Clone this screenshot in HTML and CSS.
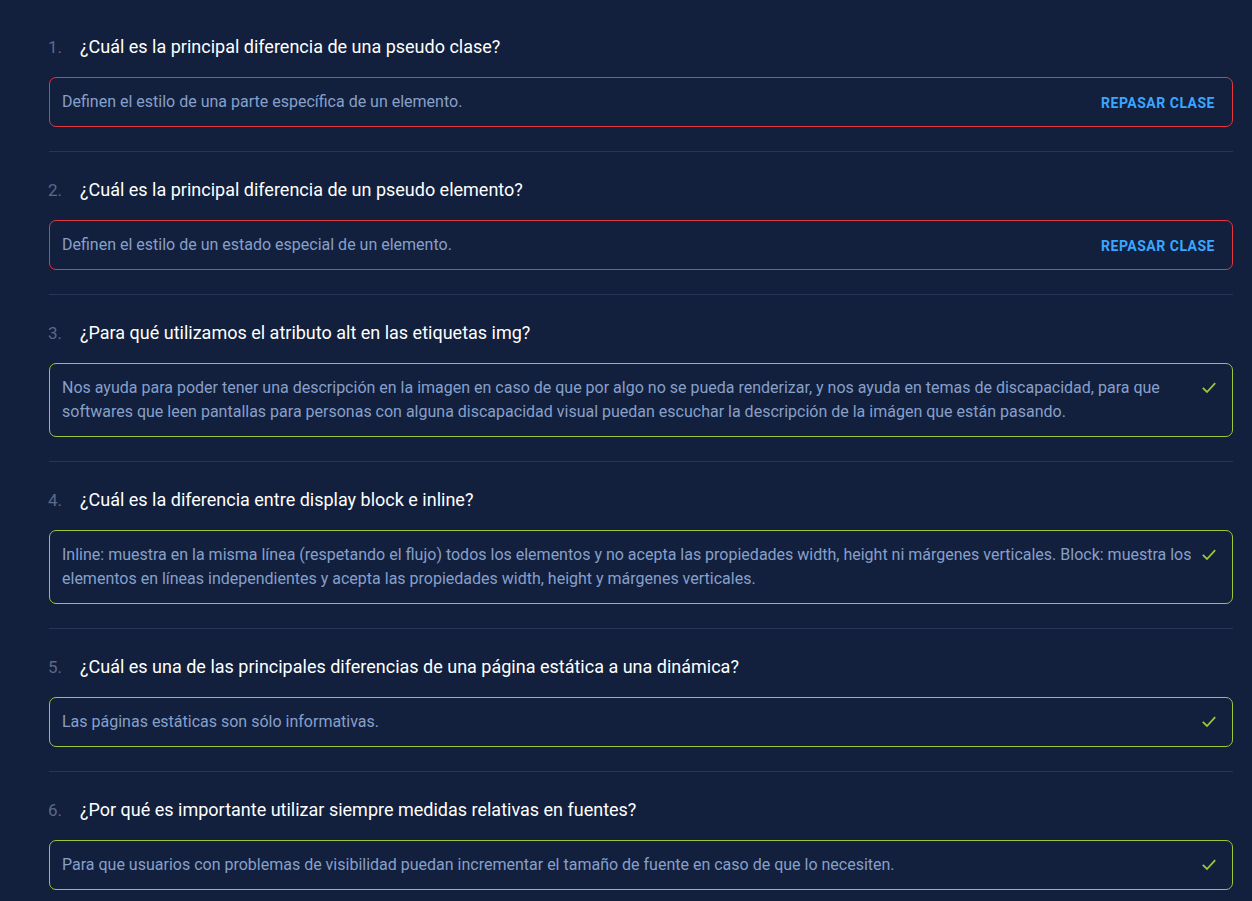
FILE: index.html
```html
<!DOCTYPE html>
<html lang="es">
<head>
<meta charset="utf-8">
<link rel="stylesheet" href="styles.css">
</head>
<body>
<ol class="quiz">
  <li class="item">
    <div class="question"><span class="num">1.</span><span class="qtext">¿Cuál es la principal diferencia de una pseudo clase?</span></div>
    <div class="answer wrong"><p class="atext">Definen el estilo de una parte específica de un elemento.</p><a class="review" href="#">Repasar clase</a></div>
  </li>
  <li class="item">
    <div class="question"><span class="num">2.</span><span class="qtext">¿Cuál es la principal diferencia de un pseudo elemento?</span></div>
    <div class="answer wrong"><p class="atext">Definen el estilo de un estado especial de un elemento.</p><a class="review" href="#">Repasar clase</a></div>
  </li>
  <li class="item">
    <div class="question"><span class="num">3.</span><span class="qtext">¿Para qué utilizamos el atributo alt en las etiquetas img?</span></div>
    <div class="answer right"><p class="atext">Nos ayuda para poder tener una descripción en la imagen en caso de que por algo no se pueda renderizar, y nos ayuda en temas de discapacidad, para que softwares que leen pantallas para personas con alguna discapacidad visual puedan escuchar la descripción de la imágen que están pasando.</p><svg class="check" viewBox="0 0 14 12" width="14" height="12"><path d="M0.8 5.8L5 10L13.2 1.2" fill="none" stroke="currentColor" stroke-width="1.8"/></svg></div>
  </li>
  <li class="item">
    <div class="question"><span class="num">4.</span><span class="qtext">¿Cuál es la diferencia entre display block e inline?</span></div>
    <div class="answer right"><p class="atext">Inline: muestra en la misma línea (respetando el flujo) todos los elementos y no acepta las propiedades width, height ni márgenes verticales. Block: muestra los elementos en líneas independientes y acepta las propiedades width, height y márgenes verticales.</p><svg class="check" viewBox="0 0 14 12" width="14" height="12"><path d="M0.8 5.8L5 10L13.2 1.2" fill="none" stroke="currentColor" stroke-width="1.8"/></svg></div>
  </li>
  <li class="item">
    <div class="question"><span class="num">5.</span><span class="qtext">¿Cuál es una de las principales diferencias de una página estática a una dinámica?</span></div>
    <div class="answer right"><p class="atext">Las páginas estáticas son sólo informativas.</p><svg class="check" viewBox="0 0 14 12" width="14" height="12"><path d="M0.8 5.8L5 10L13.2 1.2" fill="none" stroke="currentColor" stroke-width="1.8"/></svg></div>
  </li>
  <li class="item">
    <div class="question"><span class="num">6.</span><span class="qtext">¿Por qué es importante utilizar siempre medidas relativas en fuentes?</span></div>
    <div class="answer right"><p class="atext">Para que usuarios con problemas de visibilidad puedan incrementar el tamaño de fuente en caso de que lo necesiten.</p><svg class="check" viewBox="0 0 14 12" width="14" height="12"><path d="M0.8 5.8L5 10L13.2 1.2" fill="none" stroke="currentColor" stroke-width="1.8"/></svg></div>
  </li>
</ol>
</body>
</html>
```
FILE: styles.css
```css
html, body {
  margin: 0;
  padding: 0;
  background: #121f3d;
  font-family: Roboto, "Liberation Sans", sans-serif;
}
.quiz {
  list-style: none;
  margin: 0;
  padding: 33px 19px 0 49px;
}
.item {
  padding-bottom: 24px;
  border-bottom: 1px solid #283656;
  margin-bottom: 24px;
}
.question {
  display: flex;
  align-items: baseline;
  margin-bottom: 16px;
  line-height: 28px;
  margin-left: -1px;
}
.num {
  width: 32px;
  color: #5c6a89;
  font-size: 17px;
}
.qtext {
  color: #ffffff;
  font-size: 18px;
}
.answer {
  display: flex;
  align-items: flex-start;
  gap: 10px;
  border: 1px solid;
  border-radius: 7px;
  padding: 12px 16px 12px 12px;
}
.answer.wrong { border-color: #e5363f; padding-right: 17px; }
.answer.right { border-color: #9fc639; }
.atext {
  flex: 1;
  margin: 0;
  color: #87a0ca;
  font-size: 16px;
  line-height: 24px;
}
.review {
  color: #3aa6ff;
  font-size: 14px;
  font-weight: 700;
  text-transform: uppercase;
  letter-spacing: 0.5px;
  text-decoration: none;
  line-height: 22px;
  padding-top: 2px;
}
.check {
  color: #9fc639;
  margin-top: 6px;
  flex: none;
}
```
